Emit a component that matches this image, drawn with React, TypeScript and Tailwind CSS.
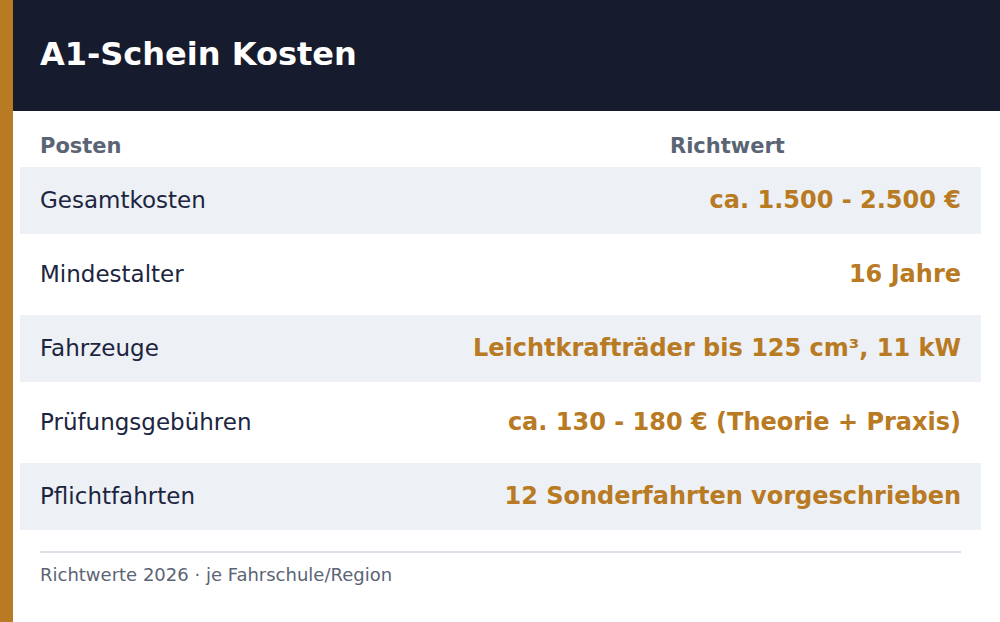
const rows = [
  { label: "Gesamtkosten", value: "ca. 1.500 - 2.500 €" },
  { label: "Mindestalter", value: "16 Jahre" },
  { label: "Fahrzeuge", value: "Leichtkrafträder bis 125 cm³, 11 kW" },
  { label: "Prüfungsgebühren", value: "ca. 130 - 180 € (Theorie + Praxis)" },
  { label: "Pflichtfahrten", value: "12 Sonderfahrten vorgeschrieben" },
];

export default function App() {
  return (
    <div className="flex h-[622px] w-[1000px] bg-white font-['DejaVu_Sans',sans-serif]">
      <div className="w-[13px] shrink-0 bg-[#b87a22]" />
      <div className="flex flex-1 flex-col">
        {/* Title bar */}
        <header className="flex h-[111px] items-center bg-[#161c2d] pb-1 pl-[27px]">
          <h1 className="text-[32px] font-bold leading-none text-white">A1-Schein Kosten</h1>
        </header>

        {/* Table */}
        <div className="pl-[7px] pr-[19px]">
          <div className="flex h-[56px] items-center pt-[16px] text-[21px] font-bold text-[#5b6475]">
            <div className="w-[630px] pl-5">Posten</div>
            <div className="pl-5">Richtwert</div>
          </div>
          <div className="flex flex-col gap-[7px]">
            {rows.map((r, i) => (
              <div
                key={r.label}
                className={`flex h-[67px] items-center justify-between px-5 ${i % 2 === 0 ? "bg-[#edf0f5]" : "bg-white"}`}
              >
                <span className="text-[23px] text-[#1c2540]">{r.label}</span>
                <span className="pb-[2px] text-[24px] font-bold text-[#b87a22]">{r.value}</span>
              </div>
            ))}
          </div>
        </div>

        {/* Footer note */}
        <div className="ml-[27px] mt-[21px] h-[2px] w-[921px] bg-[#dcdfe8]" />
        <p className="ml-[27px] mt-[8px] text-[18px] text-[#5b6475]">
          Richtwerte 2026 · je Fahrschule/Region
        </p>
      </div>
    </div>
  );
}
